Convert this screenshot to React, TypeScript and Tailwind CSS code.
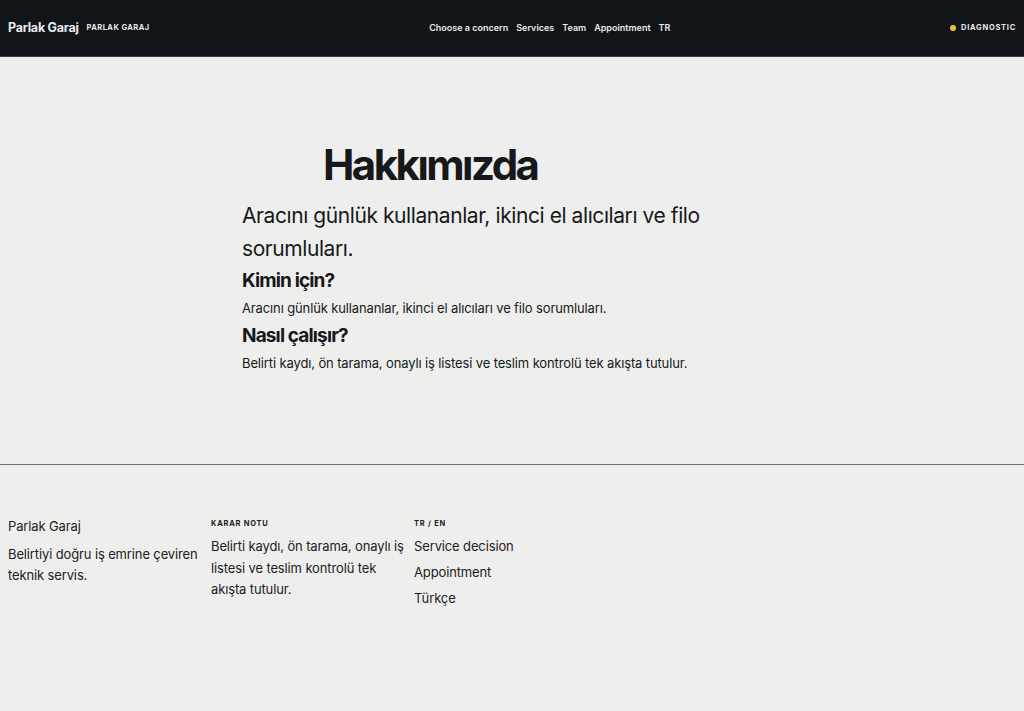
export default function App() {
  return (
    <div
      className="min-h-screen bg-[#eeefec] text-[#16181b]"
      style={{ fontFamily: "Inter, 'Noto Sans', sans-serif" }}
    >
      <header className="flex h-[57px] items-center justify-between border-b border-[#3a3d42] bg-[#111418] px-2 text-[#e9eaec]">
        <div className="flex items-center gap-2">
          <span className="text-[12.5px] font-bold tracking-[-0.02em]">Parlak Garaj</span>
          <span className="text-[7.5px] font-bold uppercase tracking-[0.06em]">Parlak Garaj</span>
        </div>
        <nav className="flex items-center gap-2 text-[9px] font-semibold">
          <a>Choose a concern</a>
          <a>Services</a>
          <a>Team</a>
          <a>Appointment</a>
          <a>TR</a>
        </nav>
        <div className="flex items-center gap-[5px]">
          <span className="h-[6px] w-[6px] rounded-full bg-[#f5c21b]" />
          <span className="text-[7.5px] font-bold uppercase tracking-[0.1em]">Diagnostic</span>
        </div>
      </header>

      <main className="flex justify-center border-b border-[#6e706f] pb-[90px] pt-[87px]">
        <div className="w-[540px]">
          <h1 className="pl-[81px] text-[42px] font-bold leading-none tracking-[-0.06em]">Hakkımızda</h1>
          <p className="mt-[13px] w-[480px] text-[21px] leading-[33px] tracking-[-0.02em]">
            Aracını günlük kullananlar, ikinci el alıcıları ve filo sorumluları.
          </p>
          <h2 className="mt-[4px] text-[19px] font-bold leading-[24px] tracking-[-0.045em]">Kimin için?</h2>
          <p className="mt-[4px] text-[13px] leading-[22px] tracking-[-0.01em]">
            Aracını günlük kullananlar, ikinci el alıcıları ve filo sorumluları.
          </p>
          <h2 className="mt-[5px] text-[19px] font-bold leading-[24px] tracking-[-0.045em]">Nasıl çalışır?</h2>
          <p className="mt-[4px] text-[13px] leading-[22px] tracking-[-0.01em]">
            Belirti kaydı, ön tarama, onaylı iş listesi ve teslim kontrolü tek akışta tutulur.
          </p>
        </div>
      </main>

      <footer className="grid grid-cols-[195px_195px_195px] gap-x-2 px-2 pt-[53px] text-[13px] tracking-[-0.01em] text-[#1e2023]">
        <div>
          <p className="leading-[16px]">Parlak Garaj</p>
          <p className="mt-[10px] leading-[21px]">Belirtiyi doğru iş emrine çeviren teknik servis.</p>
        </div>
        <div>
          <p className="text-[7.5px] font-bold uppercase leading-[12px] tracking-[0.1em]">Karar notu</p>
          <p className="mt-[6px] leading-[21.5px]">
            Belirti kaydı, ön tarama, onaylı iş listesi ve teslim kontrolü tek akışta tutulur.
          </p>
        </div>
        <div>
          <p className="text-[7.5px] font-bold uppercase leading-[12px] tracking-[0.1em]">TR / EN</p>
          <ul className="mt-[6px] flex flex-col gap-[5px] leading-[21px]">
            <li>Service decision</li>
            <li>Appointment</li>
            <li>Türkçe</li>
          </ul>
        </div>
      </footer>
    </div>
  );
}
